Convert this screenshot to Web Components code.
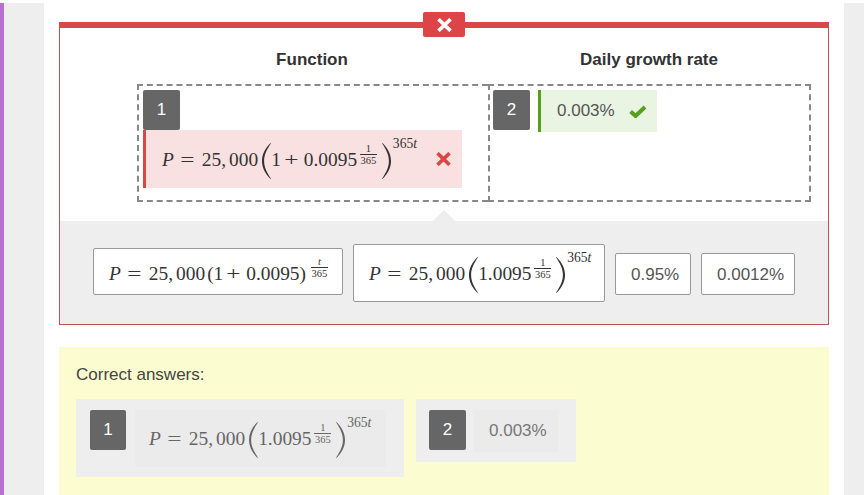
<!DOCTYPE html>
<html>
<head>
<meta charset="utf-8">
<title>Drag and drop answers</title>
<style>
  html, body { margin: 0; height: 495px; overflow: hidden; background: #fff; }
  body { font-family: "Liberation Sans", Arial, sans-serif; font-size: 17px; color: #444; }
</style>
</head>
<body>
<page-shell>
  <quiz-panel>
    <span slot="head-a">Function</span>
    <span slot="head-b">Daily growth rate</span>
    <drop-zone slot="zone-a" stack>
      <num-badge>1</num-badge>
      <answer-card status="wrong" style="width:319px;height:58px"><math-formula kind="power" inner="1 + 0.0095" style="padding-bottom:3px"></math-formula></answer-card>
    </drop-zone>
    <drop-zone slot="zone-b">
      <num-badge>2</num-badge>
      <answer-card status="right" style="height:42px">0.003%</answer-card>
    </drop-zone>
    <choice-chip slot="tray" style="width:250px;height:47px;padding-top:7px"><math-formula kind="plain"></math-formula></choice-chip>
    <choice-chip slot="tray" style="width:252px;height:58px;padding-top:6px"><math-formula kind="power" inner="1.0095"></math-formula></choice-chip>
    <choice-chip slot="tray" style="width:76px;height:42px;padding-top:1px">0.95%</choice-chip>
    <choice-chip slot="tray" style="width:94px;height:42px;padding-top:1px">0.0012%</choice-chip>
  </quiz-panel>
  <correct-panel>
    <correct-group>
      <num-badge small>1</num-badge>
      <correct-value style="width:251px;height:57px"><math-formula kind="power" inner="1.0095" muted style="padding-bottom:3px"></math-formula></correct-value>
    </correct-group>
    <correct-group style="padding-left:13px;gap:8px">
      <num-badge>2</num-badge>
      <correct-value style="width:84px;height:42px;padding-left:15px">0.003%</correct-value>
    </correct-group>
  </correct-panel>
</page-shell>

<script>
const crossIcon = (colour) => `
  <svg width="15" height="14" viewBox="0 0 15 14" aria-hidden="true">
    <path d="M1.5 1.2 13.5 12.8M13.5 1.2 1.5 12.8" fill="none" stroke="${colour}" stroke-width="3.6"/>
  </svg>`;

const checkIcon = `
  <svg width="18" height="13" viewBox="0 0 18 13" aria-hidden="true">
    <path d="M1.6 6.5 6.6 11 16 2" fill="none" stroke="#5a9e1f" stroke-width="4"/>
  </svg>`;

const parenPath = "M9.5 0C3.5 6 1 12 1 18s2.5 12 8.5 18l.4-.5C5.5 29 3.1 24 3.1 18S5.5 7 9.9.5z";

class Base extends HTMLElement {
  constructor() {
    super();
    this.attachShadow({ mode: "open" });
  }

  connectedCallback() {
    this.shadowRoot.innerHTML = this.markup();
  }
}

class PageShell extends Base {
  markup() {
    return `
    <style>
      :host {
        display: grid;
        grid-template-columns: 4px 40px 800px 20px;
        padding-top: 3px;
      }
      .accent { background: #b86fd0; }
      .rail { background: #eee; }
      main { padding: 19px 15px 0; height: 473px; overflow: hidden; }
    </style>
    <div class="accent"></div>
    <div class="rail"></div>
    <main><slot></slot></main>
    <div class="rail"></div>
  `;
  }
}

class QuizPanel extends Base {
  markup() {
    return `
    <style>
      :host {
        display: block;
        position: relative;
        border: 1px solid #b9525a;
        border-top: 6px solid #d94848;
      }
      button {
        position: absolute;
        left: 363px;
        top: -16px;
        width: 42px;
        height: 25px;
        padding: 0;
        border: 0;
        border-radius: 2px;
        background: #dc4448;
        display: flex;
        align-items: center;
        justify-content: center;
      }
      .heads {
        display: grid;
        grid-template-columns: 350px 324px;
        margin: 20px 0 12px 77px;
        font-weight: bold;
        line-height: 24px;
        color: #333;
        text-align: center;
      }
      .zones {
        display: grid;
        grid-template-columns: 351px 323px;
        grid-template-rows: 118px;
        margin: 0 0 19px 77px;
      }
      .tray {
        position: relative;
        display: flex;
        align-items: baseline;
        gap: 10px;
        height: 103px;
        box-sizing: border-box;
        padding: 23px 33px 0;
        background: #eee;
      }
      .tray::before {
        content: "";
        position: absolute;
        left: 373px;
        top: -11px;
        border: solid transparent;
        border-width: 0 11px 11px;
        border-bottom-color: #eee;
      }
    </style>
    <button aria-label="Incorrect">${crossIcon("#fff")}</button>
    <div class="heads"><div><slot name="head-a"></slot></div><div><slot name="head-b"></slot></div></div>
    <div class="zones"><slot name="zone-a"></slot><slot name="zone-b"></slot></div>
    <div class="tray"><slot name="tray"></slot></div>
  `;
  }
}

class DropZone extends Base {
  markup() {
    const stack = this.hasAttribute("stack");
    return `
    <style>
      :host {
        display: flex;
        flex-direction: ${stack ? "column" : "row"};
        align-items: flex-start;
        gap: ${stack ? 0 : 8}px;
        box-sizing: border-box;
        width: ${stack ? 351 : 323}px;
        height: 118px;
        padding: 4px 0 0 ${stack ? 4 : 3}px;
        border: 2px dashed #888;
        ${stack ? "border-right: 0;" : ""}
      }
    </style>
    <slot></slot>
  `;
  }
}

class NumBadge extends Base {
  markup() {
    return `
    <style>
      :host {
        display: flex;
        flex: none;
        align-items: center;
        justify-content: center;
        box-sizing: border-box;
        width: ${this.hasAttribute("small") ? 36 : 37}px;
        height: 40px;
        padding-bottom: 1px;
        border-radius: 2px;
        background: #666;
        color: #fff;
        font-size: 17px;
      }
    </style>
    <slot></slot>
  `;
  }
}

class AnswerCard extends Base {
  markup() {
    const wrong = this.getAttribute("status") === "wrong";
    return `
    <style>
      :host {
        display: flex;
        align-items: center;
        box-sizing: border-box;
        padding: 0 10px 0 16px;
        gap: ${wrong ? 19 : 14}px;
        border-left: 3px solid ${wrong ? "#d94848" : "#5a9e1f"};
        background: ${wrong ? "#f9e1e1" : "#eaf4e3"};
        color: #555;
        line-height: 24px;
      }
    </style>
    <slot></slot>
    ${wrong ? crossIcon("#d94848") : checkIcon}
  `;
  }
}

class ChoiceChip extends Base {
  markup() {
    return `
    <style>
      :host {
        display: flex;
        flex: none;
        align-items: baseline;
        box-sizing: border-box;
        padding: 0 15px;
        border: 1px solid #999;
        border-radius: 2px;
        background: #fff;
        color: #555;
        line-height: 40px;
        white-space: nowrap;
      }
    </style>
    <slot></slot>
  `;
  }
}

class CorrectPanel extends Base {
  markup() {
    return `
    <style>
      :host {
        display: block;
        height: 160px;
        margin-top: 22px;
        padding: 16px 17px 0;
        background: #fbfccf;
      }
      p { margin: 0 0 12px; line-height: 24px; color: #444; }
      div { display: flex; align-items: flex-start; gap: 12px; }
    </style>
    <p>Correct answers:</p>
    <div><slot></slot></div>
  `;
  }
}

class CorrectGroup extends Base {
  markup() {
    return `
    <style>
      :host {
        display: flex;
        align-items: flex-start;
        gap: 9px;
        padding: 11px 18px 10px 14px;
        background: #eee;
      }
    </style>
    <slot></slot>
  `;
  }
}

class CorrectValue extends Base {
  markup() {
    return `
    <style>
      :host {
        display: flex;
        align-items: center;
        box-sizing: border-box;
        padding: 0 14px;
        background: #ebebeb;
        color: #777;
        line-height: 24px;
      }
    </style>
    <slot></slot>
  `;
  }
}

class MathFormula extends Base {
  markup() {
    const kind = this.getAttribute("kind");
    const inner = (this.getAttribute("inner") || "").replace(" + ", '<span class="plus"><span class="wide">+</span></span>');
    const paren = (cls) => `<svg class="${cls}" width="10" height="36" viewBox="0 0 10 36"><path d="${parenPath}"/></svg>`;
    const body = kind === "plain"
      ? `<span class="round">(1<span class="plus"><span class="wide">+</span></span>0.0095)</span><span class="frac high"><i>t</i><b>365</b></span>`
      : `${paren("paren")}<span>${inner}</span><span class="frac"><span>1</span><b>365</b></span>${paren("paren close")}<span class="sup">365<i>t</i></span>`;
    return `
    <style>
      :host {
        display: inline-block;
        font: 19.4px/36px "Liberation Serif", "Times New Roman", serif;
        color: ${this.hasAttribute("muted") ? "#666" : "#333"};
        fill: currentColor;
        white-space: nowrap;
      }
      .wide { display: inline-block; transform: scaleX(1.3); }
      .eq { margin: 0 8.5px; }
      .thou { margin-left: 3px; }
      .plus { margin: 0 7px 0 5px; }
      .round { margin-left: 2px; }
      .paren { vertical-align: -13px; margin: 0 0 0 3px; }
      .close { transform: scaleX(-1); margin: 0 1px 0 5px; }
      .frac {
        display: inline-flex;
        flex-direction: column;
        align-items: center;
        vertical-align: 14px;
        margin-left: 3px;
        font-size: 10.5px;
        line-height: 11px;
        font-weight: normal;
      }
      .frac b { font-weight: normal; border-top: 1px solid currentColor; padding: 0 .5px; }
      .high { vertical-align: 15px; margin-left: 5px; }
      .sup { font-size: 13.6px; vertical-align: 18px; line-height: 1; }
    </style>
    <i>P</i><span class="eq"><span class="wide">=</span></span>25,<span class="thou">000</span>${body}
  `;
  }
}

customElements.define("page-shell", PageShell);
customElements.define("quiz-panel", QuizPanel);
customElements.define("drop-zone", DropZone);
customElements.define("num-badge", NumBadge);
customElements.define("answer-card", AnswerCard);
customElements.define("choice-chip", ChoiceChip);
customElements.define("correct-panel", CorrectPanel);
customElements.define("correct-group", CorrectGroup);
customElements.define("correct-value", CorrectValue);
customElements.define("math-formula", MathFormula);
</script>
</body>
</html>
